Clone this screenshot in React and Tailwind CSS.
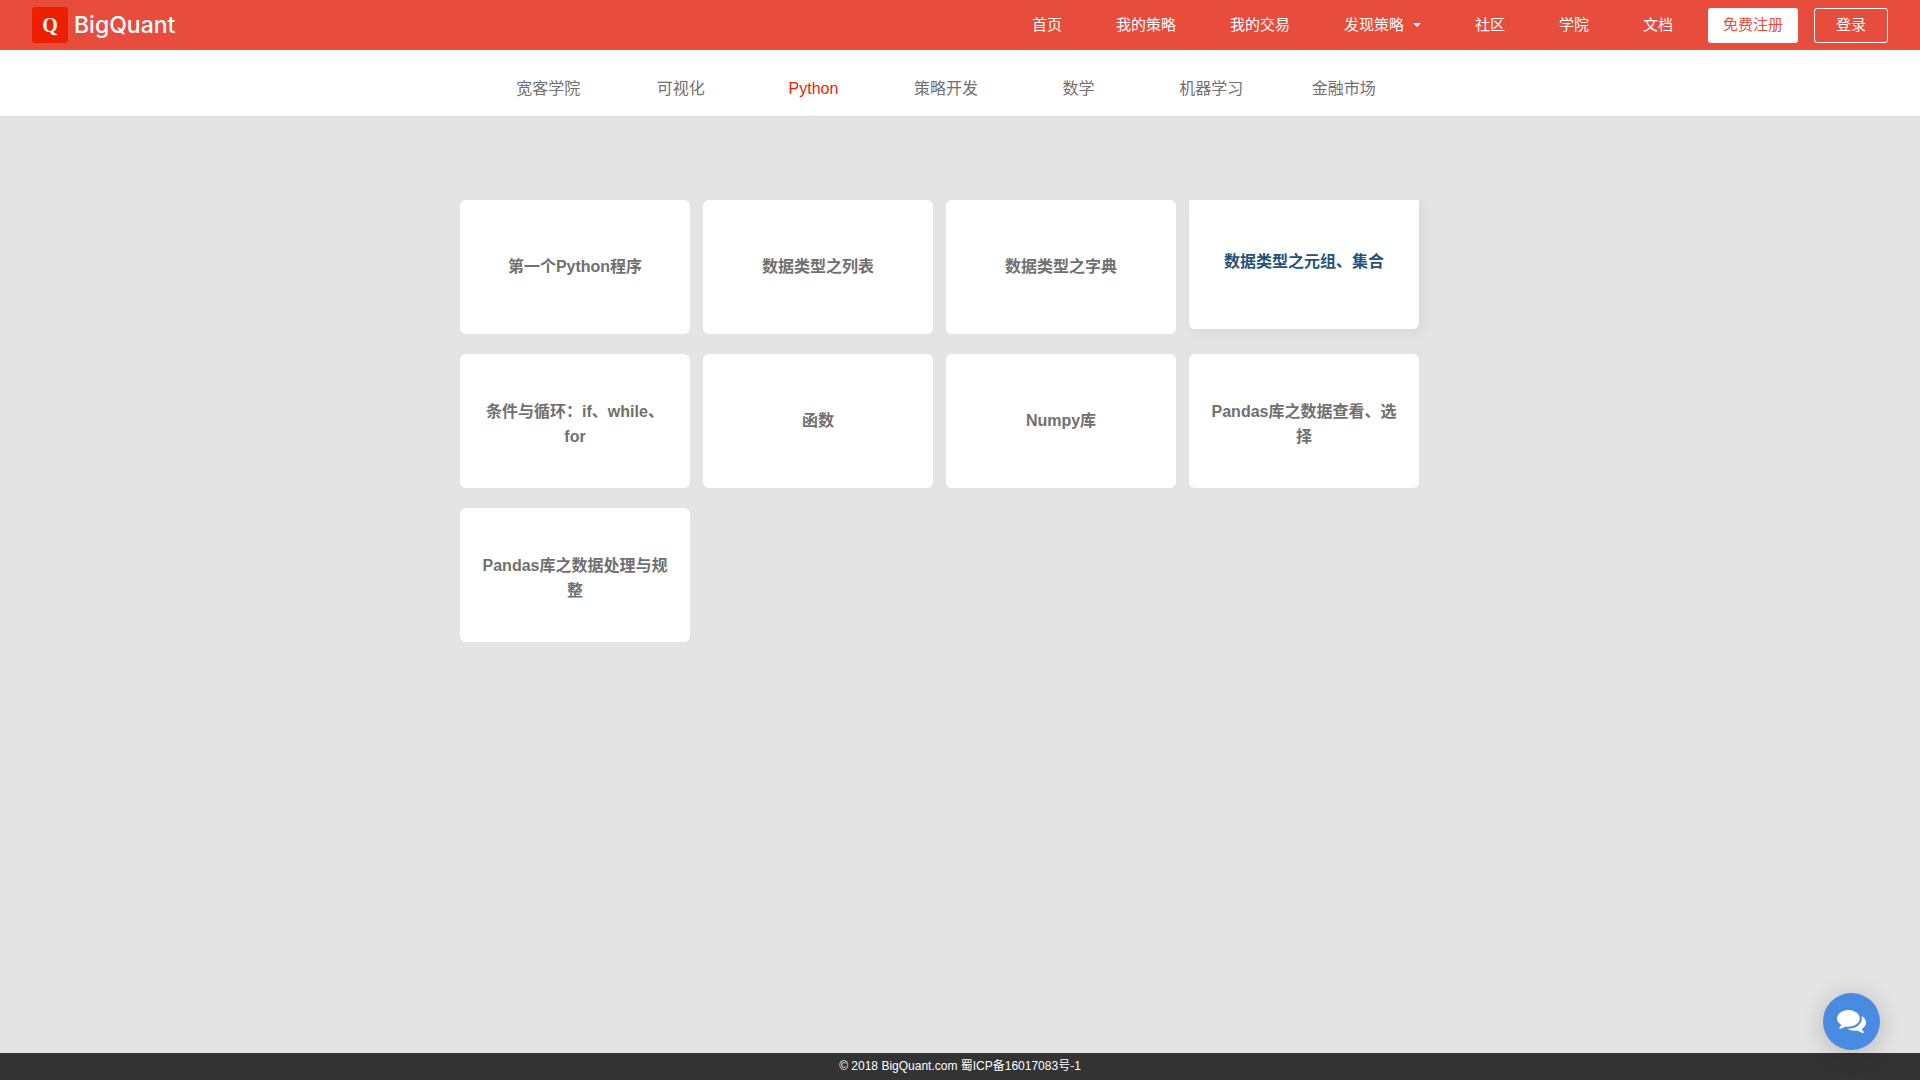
const navBefore = ["首页", "我的策略", "我的交易"];
const navAfter = ["社区", "学院", "文档"];
const tabs = ["宽客学院", "可视化", "Python", "策略开发", "数学", "机器学习", "金融市场"];
const lessons = [
  "第一个Python程序",
  "数据类型之列表",
  "数据类型之字典",
  "数据类型之元组、集合",
  "条件与循环：if、while、for",
  "函数",
  "Numpy库",
  "Pandas库之数据查看、选择",
  "Pandas库之数据处理与规整",
];

function CommentsIcon({ className }) {
  return (
    <svg viewBox="0 64 1792 1792" fill="currentColor" className={className} aria-hidden="true">
      <path d="M1408 768q0 139-94 257t-256.5 186.5-353.5 68.5q-86 0-176-16-124 88-278 128-36 9-86 16h-3q-11 0-20.5-8t-11.5-21q-1-3-1-6.5t.5-6.5 2-6l2.5-5 3.5-5.5 4-5 4.5-5 4-4.5q5-6 23-25t26-29.5 22.5-29 25-38.5 20.5-44q-124-72-195-177t-71-224q0-139 94-257t256.5-186.5 353.5-68.5 353.5 68.5 256.5 186.5 94 257zm384 256q0 120-71 224.5t-195 176.5q10 24 20.5 44t25 38.5 22.5 29 26 29.5 23 25q1 1 4 4.5t4.5 5 4 5 3.5 5.5l2.5 5 2 6 .5 6.5-1 6.5q-3 14-13 22t-22 7q-50-7-86-16-154-40-278-128-90 16-176 16-271 0-472-132 58 4 88 4 161 0 309-45t264-129q125-92 192-212t67-254q0-77-23-152 129 71 204 178t75 230z" />
    </svg>
  );
}

function Header() {
  return (
    <header className="flex h-[50px] items-center justify-between bg-[#e84c3d] px-8 text-[15px] text-white">
      <a href="#" className="flex items-center gap-[6px]">
        <span className="flex size-9 items-center justify-center rounded-[3px] bg-[#ec1f00] font-['Liberation_Serif',serif] text-xl leading-none font-bold">
          Q
        </span>
        <span className="font-[Inter,sans-serif] text-[23px] leading-9 font-medium">BigQuant</span>
      </a>
      <nav className="flex items-center">
        <div className="mr-[35px] flex items-center gap-[54px]">
          {navBefore.map((t) => (
            <a key={t} href="#">{t}</a>
          ))}
          <button type="button" className="flex items-center gap-[9px]">
            发现策略
            <span className="border-x-4 border-t-4 border-x-transparent border-t-white" />
          </button>
          {navAfter.map((t) => (
            <a key={t} href="#">{t}</a>
          ))}
        </div>
        <a href="#" className="mr-4 flex h-[35px] w-[90px] items-center justify-center rounded-[3px] bg-white text-[#e84c3d]">
          免费注册
        </a>
        <a href="#" className="flex h-[35px] w-[74px] items-center justify-center rounded-[3px] border border-white">
          登录
        </a>
      </nav>
    </header>
  );
}

function Tabs() {
  return (
    <nav className="border-b border-[#dcdcdc] bg-white pt-[27px] pb-[15px]">
      <div className="mx-auto max-w-[1000px] pr-[50px] pl-[22px]">
        <ul className="grid grid-cols-7 text-center text-base leading-6 text-[#707070]">
          {tabs.map((t) => (
            <li key={t}>
              <a href="#" className={t === "Python" ? "text-[#ec1f00]" : ""}>{t}</a>
            </li>
          ))}
        </ul>
      </div>
    </nav>
  );
}

function LessonCard({ title, active }) {
  return (
    <a
      href="#"
      className={
        "flex h-[134px] items-center justify-center rounded-md bg-white px-5 pt-[5px] text-center text-base leading-[25px] font-bold " +
        (active
          ? "-translate-y-[5px] text-[#23527c] shadow-[4px_4px_12px_rgba(0,0,0,0.05)]"
          : "text-[#707070]")
      }
    >
      <span className="min-h-8">{title}</span>
    </a>
  );
}

export default function App() {
  return (
    <div className="flex min-h-screen flex-col bg-[#e4e4e4] font-['Liberation_Sans','Noto_Sans_CJK_SC',sans-serif]">
      <Header />
      <Tabs />
      <main className="flex-1 pt-[83px]">
        <div className="mx-auto grid max-w-[1000px] grid-cols-4 gap-x-[13px] gap-y-5 overflow-hidden pr-[41px] pb-10">
          {lessons.map((t, i) => (
            <LessonCard key={t} title={t} active={i === 3} />
          ))}
        </div>
      </main>
      <footer className="flex h-[27px] items-center justify-center bg-[#333] pb-[2px] text-xs text-white">
        © 2018 BigQuant.com 蜀ICP备16017083号-1
      </footer>
      <button
        type="button"
        aria-label="在线咨询"
        className="fixed right-10 bottom-[30px] flex size-[57px] items-center justify-center rounded-full bg-[#4a8be2] text-white shadow-[0_4px_24px_rgba(0,0,0,0.2)]"
      >
        <CommentsIcon className="size-[29px]" />
      </button>
    </div>
  );
}
